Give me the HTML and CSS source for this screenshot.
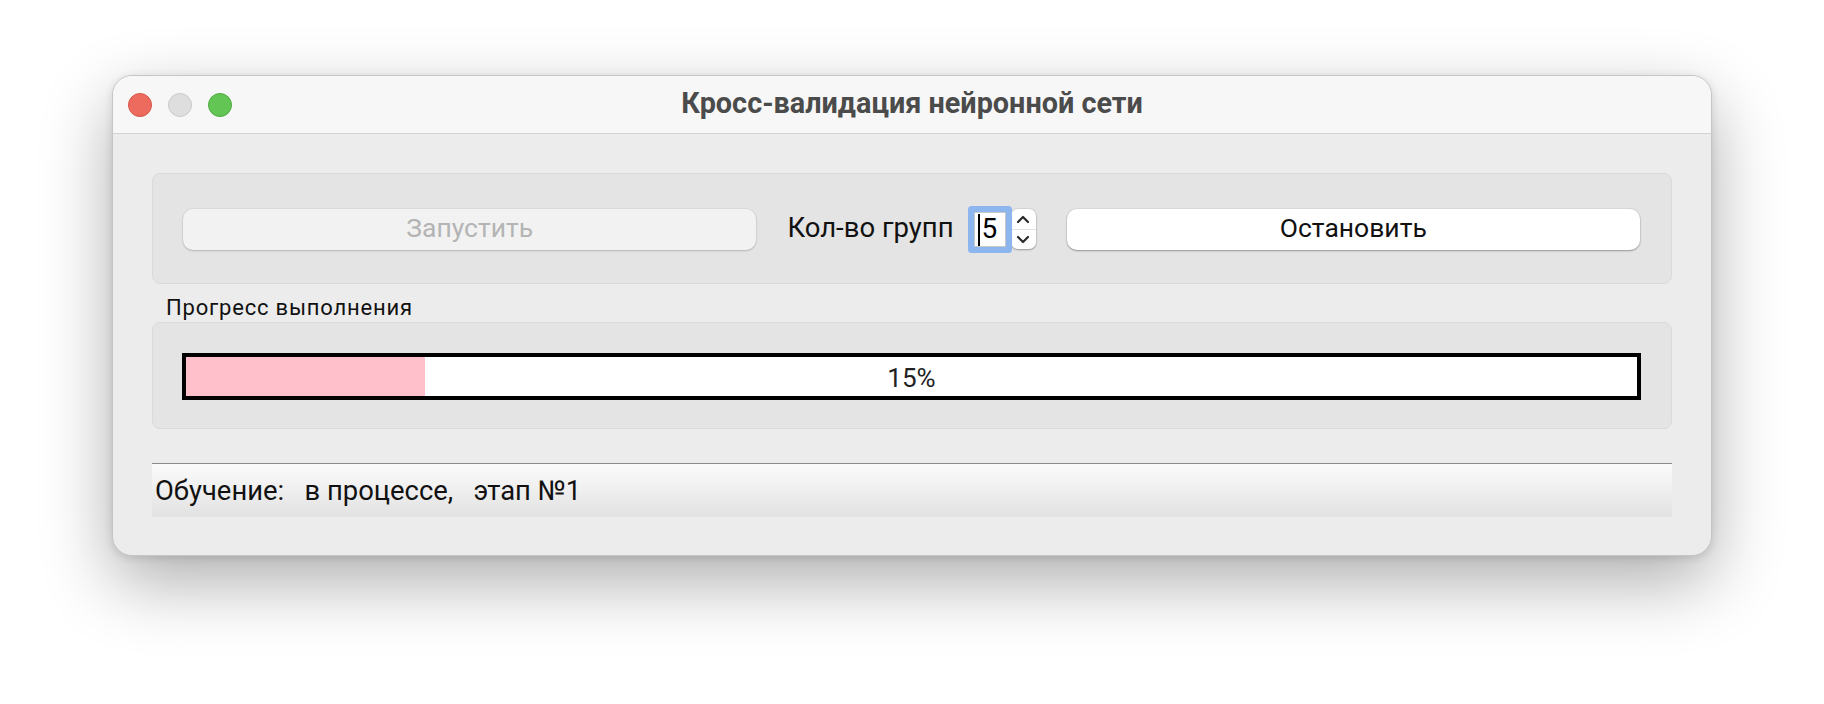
FILE: index.html
```html
<!DOCTYPE html>
<html lang="ru">
<head>
<meta charset="utf-8">
<title>Кросс-валидация нейронной сети</title>
<link rel="stylesheet" href="styles.css">
</head>
<body>
<div class="desk">
  <div class="window">
    <div class="titlebar">
      <div class="lights">
        <span class="light red"></span>
        <span class="light gray"></span>
        <span class="light green"></span>
      </div>
      <div class="title">Кросс-валидация нейронной сети</div>
      <div></div>
    </div>
    <div class="content">
      <div class="group controls">
        <button class="btn btn-disabled">Запустить</button>
        <div class="middle">
          <span class="label">Кол-во групп</span>
          <span class="field"><span class="caret"></span>5</span>
          <span class="stepper">
            <svg class="chev" width="14" height="9" viewBox="0 0 14 9"><path d="M2 7 L7 2 L12 7" fill="none" stroke="#2a2a2a" stroke-width="2.2" stroke-linecap="round" stroke-linejoin="round"/></svg>
            <span class="sep"></span>
            <svg class="chev" width="14" height="9" viewBox="0 0 14 9"><path d="M2 2 L7 7 L12 2" fill="none" stroke="#2a2a2a" stroke-width="2.2" stroke-linecap="round" stroke-linejoin="round"/></svg>
          </span>
        </div>
        <button class="btn btn-normal">Остановить</button>
      </div>
      <div class="group-title">Прогресс выполнения</div>
      <div class="group progress-group">
        <div class="bar">
          <div class="fill" style="width: 16.5%"></div>
          <div class="pct">15%</div>
        </div>
      </div>
      <div class="status">Обучение:   в процессе,   этап №1</div>
    </div>
  </div>
</div>
</body>
</html>
```
FILE: styles.css
```css
html, body {
  margin: 0;
  padding: 0;
  background: #ffffff;
}
body {
  font-family: Roboto, "Liberation Sans", sans-serif;
  color: #000;
}
.desk {
  padding: 75px 0 0 112px;
  height: 704px;
  box-sizing: border-box;
}
.window {
  width: 1600px;
  height: 481px;
  box-sizing: border-box;
  border: 1px solid #c6c6c6;
  border-radius: 20px;
  background: #ececec;
  overflow: hidden;
  box-shadow: 0 26px 70px rgba(0,0,0,0.32), 0 2px 8px rgba(0,0,0,0.12);
}
.titlebar {
  height: 57px;
  background: #f7f7f7;
  border-bottom: 1px solid #d3d3d3;
  display: grid;
  grid-template-columns: 1fr auto 1fr;
  align-items: center;
}
.lights {
  display: flex;
  gap: 16px;
  padding-left: 15px;
}
.light {
  width: 24px;
  height: 24px;
  border-radius: 50%;
  box-sizing: border-box;
}
.red { background: #ec6a5e; border: 1px solid #d65446; }
.gray { background: #dedede; border: 1px solid #c9c9c9; }
.green { background: #62c554; border: 1px solid #50a93f; }
.title {
  font-weight: 700;
  font-size: 28.8px;
  color: #4b4b4b;
  margin-top: -3px;
}
.content {
  padding: 39px 39px 0 39px;
}
.group {
  box-sizing: border-box;
  background: #e4e4e4;
  border: 1px solid #dadada;
  border-radius: 8px;
}
.controls {
  height: 111px;
  padding: 1px 31px 0 30px;
  display: grid;
  grid-template-columns: 1fr auto 1fr;
  align-items: center;
}
.btn {
  height: 41px;
  border: none;
  border-radius: 10px;
  font-family: Roboto, "Liberation Sans", sans-serif;
  font-size: 26.5px;
  padding: 0 0 3px;
}
.btn-disabled {
  background: #f2f2f2;
  color: #b4b4b4;
  box-shadow: 0 1px 2px rgba(0,0,0,0.18), 0 0 0 1px rgba(0,0,0,0.03);
}
.btn-normal {
  background: #ffffff;
  color: #111;
  box-shadow: 0 1px 2px rgba(0,0,0,0.32), 0 0 0 1px rgba(0,0,0,0.04);
}
.middle {
  display: flex;
  align-items: center;
  padding: 0 31px 0 31px;
}
.label {
  font-size: 27.5px;
  color: #111;
  margin-right: 20px;
  margin-top: -3px;
}
.field {
  position: relative;
  width: 32px;
  height: 35px;
  box-sizing: border-box;
  background: #fff;
  border: 1px solid #c8c8c8;
  border-radius: 1px;
  box-shadow: 0 0 0 6px #8db5ee;
  font-size: 28px;
  line-height: 32px;
  padding-left: 7px;
  margin-top: 1px;
}
.caret {
  position: absolute;
  left: 3px;
  top: 1px;
  width: 2px;
  height: 32px;
  background: #000;
}
.stepper {
  margin-left: 5px;
  width: 25px;
  height: 40px;
  box-sizing: border-box;
  background: #fff;
  border-radius: 7px;
  box-shadow: 0 1px 2px rgba(0,0,0,0.3), 0 0 0 1px rgba(0,0,0,0.05);
  display: flex;
  flex-direction: column;
  align-items: center;
  justify-content: space-between;
  padding: 6px 0 5px;
}
.sep {
  width: 100%;
  height: 1px;
  background: #e2e2e2;
}
.chev { display: block; }
.group-title {
  height: 38px;
  box-sizing: border-box;
  padding: 11px 0 0 14px;
  font-size: 22px;
  line-height: 26px;
  letter-spacing: 0.8px;
  color: #111;
}
.progress-group {
  height: 107px;
  padding: 30px 30px 0 29px;
}
.bar {
  position: relative;
  height: 47px;
  box-sizing: border-box;
  border: 4px solid #000;
  background: #fff;
}
.fill {
  height: 100%;
  background: #ffc0cb;
}
.pct {
  position: absolute;
  inset: 0;
  display: flex;
  align-items: center;
  justify-content: center;
  font-size: 26px;
  color: #222;
  padding-top: 2px;
}
.status {
  margin-top: 34px;
  height: 54px;
  box-sizing: border-box;
  border-top: 1px solid #8a8a8a;
  background: linear-gradient(#fbfbfb, #e2e2e2);
  white-space: pre;
  font-size: 27.4px;
  line-height: 54px;
  padding-left: 3px;
  color: #111;
}
```
